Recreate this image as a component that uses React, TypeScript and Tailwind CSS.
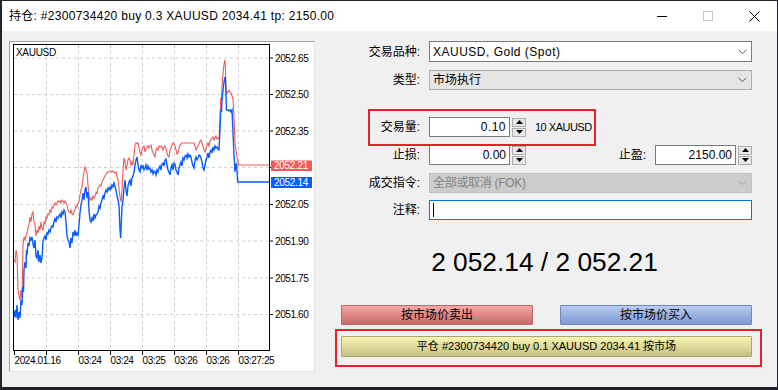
const FONT = { fontFamily: '"Liberation Sans", "Noto Sans CJK SC", sans-serif' };

const blue: number[][] = [
  [14,317],[15,310],[16,318],[17,305],[18,320],[19,312],[20,318],[21,300],[22,305],[22.7,287],[23.5,292],[24,270],[25,262],[26,268],[26.5,250],[27,255],[28,243],[29,246],[30,238],[31,240],[32,237],[33,244],[34,248],[35,240],[36,256],[37,258],[38,250],[39,262],[40,255],[41,263],[42,258],[43,241],[44,238],[45,236],[46,240],[47,233],[48,234],[49,230],[50,232],[51,228],[52,226],[53,227],[54,222],[55,218],[56,222],[57,217],[58,218],[59,216],[60,214],[61,218],[62,212],[63,214],[64,210],[65,212],[66,222],[67,236],[68,240],[69,242],[70,248],[71,238],[72,243],[73,232],[74,236],[75,230],[76,236],[77,233],[78,235],[79,225],[80,213],[81,205],[82,200],[83,193],[84,200],[85,190],[86,187],[87,198],[88,192],[89,210],[90,220],[91,222],[92,218],[93,221],[94,214],[95,218],[96,215],[97,214],[98,212],[99,206],[100,208],[101,203],[102,200],[103,196],[104,198],[105,193],[106,190],[107,192],[108,188],[109,190],[110,187],[111,189],[112,185],[113,187],[114,183],[115,186],[116,190],[117,196],[118,200],[119,205],[120,230],[120.7,238],[121.5,218],[122,207],[123,200],[124,188],[125,180],[126,190],[127,196],[128,186],[129,182],[130,180],[131,186],[132,178],[133,176],[134,172],[135,165],[136,160],[137,157],[138,165],[139,170],[140,172],[141,165],[142,168],[143,166],[144,170],[145,168],[146,165],[147,170],[148,166],[149,169],[150,168],[151,172],[152,170],[153,174],[154,171],[155,172],[156,175],[157,170],[158,172],[159,168],[160,166],[161,170],[162,164],[163,163],[164,166],[165,160],[166,159],[167,165],[168,170],[169,172],[170,175],[171,168],[172,165],[173,170],[174,163],[175,164],[176,170],[177,172],[178,175],[179,168],[180,165],[181,162],[182,166],[183,158],[184,160],[185,156],[186,155],[187,158],[188,154],[189,157],[190,155],[191,157],[192,162],[193,166],[194,168],[195,160],[196,157],[197,160],[198,158],[199,155],[200,156],[201,158],[202,162],[203,168],[204,170],[205,165],[206,160],[207,157],[208,153],[209,158],[210,152],[211,150],[212,153],[213,147],[214,150],[215,146],[216,148],[217,147],[218,149],[219,150],[220,130],[220.7,110],[221.5,112],[222,100],[223,90],[224,82],[225,77],[225.5,80],[226,95],[226.5,110],[228,110],[229,111],[230,110],[231,112],[232,110],[233,133],[234,155],[235,172],[236,165],[236.5,163],[237,170],[237.7,182],[270,182],
];

const red: number[][] = [
  [14,260],[15,262],[16,250],[17,255],[18,290],[19,296],[20,300],[21,290],[22,298],[23,245],[24,237],[25,240],[26,236],[27,233],[28,228],[29,225],[30,217],[31,222],[32,214],[33,212],[34,222],[35,225],[36,236],[37,230],[38,233],[39,226],[40,230],[41,222],[42,228],[43,230],[44,222],[45,224],[46,217],[47,218],[48,214],[49,215],[50,210],[51,212],[52,207],[53,208],[54,205],[55,203],[56,205],[57,203],[58,201],[59,202],[60,201],[61,203],[62,200],[63,201],[64,203],[65,201],[66,203],[67,205],[68,210],[69,212],[70,213],[71,210],[72,214],[73,215],[74,212],[75,210],[76,206],[77,207],[78,203],[79,202],[80,195],[81,190],[82,187],[83,178],[84,172],[85,167],[86,170],[87,173],[88,185],[89,195],[90,200],[91,198],[92,200],[93,196],[94,198],[95,197],[96,192],[97,193],[98,188],[99,187],[100,185],[101,186],[102,182],[103,180],[104,178],[105,176],[106,174],[107,173],[108,172],[110,171],[112,172],[113,171],[115,173],[116,172],[117,176],[118,180],[119,188],[120,197],[121,202],[122,190],[123,170],[124,158],[125,162],[126,170],[127,166],[128,160],[129,158],[130,160],[131,165],[132,162],[133,165],[134,155],[135,145],[136,143],[137,144],[138,143],[139,148],[140,152],[141,155],[142,150],[143,147],[144,146],[145,152],[146,149],[147,147],[148,146],[149,148],[150,146],[151,145],[152,150],[153,153],[154,155],[155,157],[156,150],[157,148],[158,150],[159,146],[160,147],[161,146],[162,147],[163,150],[164,147],[165,146],[166,149],[167,153],[168,156],[169,157],[170,150],[171,148],[172,145],[173,143],[174,144],[175,146],[176,150],[177,154],[178,153],[179,148],[180,145],[181,144],[182,143],[194,143],[195,146],[196,150],[197,148],[198,146],[199,144],[200,141],[201,140],[202,143],[203,146],[204,150],[205,152],[206,148],[207,145],[208,143],[209,146],[210,141],[211,140],[212,138],[213,137],[214,140],[215,138],[216,136],[217,139],[218,138],[219,139],[220,120],[220.7,98],[221.5,100],[222,86],[223,74],[224,64],[225,60],[225.5,70],[226,90],[226.5,95],[227,93],[228,92],[229,90],[230,92],[231,93],[232,96],[233,99],[234,117],[235,143],[236,150],[237,157],[238,162],[238.7,165],[270,165],
];

const pts = (a: number[][]) => a.map((p) => p.join(",")).join(" ");

const hGrid = [
  { y: 58, label: "2052.65" },
  { y: 94.5, label: "2052.50" },
  { y: 131, label: "2052.35" },
  { y: 167.5, label: "" },
  { y: 204.5, label: "2052.05" },
  { y: 241, label: "2051.90" },
  { y: 278, label: "2051.75" },
  { y: 314.5, label: "2051.60" },
];

const vGrid = [
  { x: 14, label: "2024.01.16" },
  { x: 46, label: "" },
  { x: 78, label: "03:24" },
  { x: 110, label: "03:24" },
  { x: 142, label: "03:25" },
  { x: 174, label: "03:26" },
  { x: 206, label: "03:26" },
  { x: 238, label: "03:27:25" },
];

function Chart() {
  return (
    <div className="ml-[7px] mt-[10px] h-[331px] w-[306px] border border-t-[#a0a0a0] border-l-[#a0a0a0] border-r-[#e3e3e3] border-b-[#e3e3e3] bg-white">
      <svg width="304" height="329" viewBox="10 42 304 329" className="block" style={FONT}>
        {hGrid.map((g) => (
          <g key={g.y}>
            <line x1="14" x2="269" y1={g.y} y2={g.y} stroke="#cfcfcf" strokeDasharray="3 3" />
            <line x1="270" x2="273" y1={g.y} y2={g.y} stroke="#000" />
            {g.label && (
              <text x="275" y={g.y + 3.6} fontSize="10" letterSpacing="-0.4" fill="#000">
                {g.label}
              </text>
            )}
          </g>
        ))}
        {vGrid.map((g) => (
          <g key={g.x}>
            {g.x > 14 && <line x1={g.x + 0.5} x2={g.x + 0.5} y1="45" y2="350" stroke="#cfcfcf" strokeDasharray="3 3" />}
            <line x1={g.x + 0.5} x2={g.x + 0.5} y1="351" y2="355" stroke="#000" />
            {g.label && (
              <text x={g.x + 0.5} y="364" fontSize="10" letterSpacing="-0.4" fill="#000">
                {g.label}
              </text>
            )}
          </g>
        ))}
        <polyline points={pts(red)} fill="none" stroke="#f25a5a" strokeWidth="1.1" strokeLinejoin="miter" />
        <polyline points={pts(blue)} fill="none" stroke="#0a5cff" strokeWidth="1.4" strokeLinejoin="miter" />
        <rect x="13.5" y="44.5" width="256" height="306" fill="none" stroke="#000" />
        <text x="16" y="55.5" fontSize="10" letterSpacing="-0.3" fill="#000">
          XAUUSD
        </text>
        <rect x="271" y="160.5" width="41" height="10.5" fill="#f25a5a" />
        <text x="274" y="169" fontSize="10" letterSpacing="-0.3" fill="#fff">
          2052.21
        </text>
        <rect x="271" y="177" width="41" height="11" fill="#0a5cff" />
        <text x="274" y="186" fontSize="10" letterSpacing="-0.3" fill="#fff">
          2052.14
        </text>
      </svg>
    </div>
  );
}

function Chevron({ color = "#5a5a5a" }: { color?: string }) {
  return (
    <svg width="9" height="6" viewBox="0 0 9 6" className="ml-auto mr-[4px]">
      <polyline points="0.5,0.8 4.5,4.6 8.5,0.8" fill="none" stroke={color} strokeWidth="1" />
    </svg>
  );
}

function Spinner() {
  return (
    <div className="ml-[2px] flex h-[19px] w-[14px] flex-col gap-[1px]">
      <div className="flex h-[9px] items-center justify-center border border-[#adadad] bg-[#e8e8e8]">
        <svg width="7" height="4" viewBox="0 0 7 4">
          <polygon points="0,4 7,4 3.5,0" fill="#000" />
        </svg>
      </div>
      <div className="flex h-[9px] items-center justify-center border border-[#adadad] bg-[#e8e8e8]">
        <svg width="7" height="4" viewBox="0 0 7 4">
          <polygon points="0,0 7,0 3.5,4" fill="#000" />
        </svg>
      </div>
    </div>
  );
}

function Label({ text }: { text: string }) {
  return <div className="w-[105px] shrink-0 text-right text-[12px] text-[#000]">{text}</div>;
}

export default function App() {
  return (
    <div className="h-[390px] w-[778px] bg-[#23232d] pl-[2px] pt-[1px]" style={FONT}>
      <div className="flex h-[386px] w-[775px] flex-col bg-[#f0f0f0]">
        {/* title bar */}
        <div className="flex h-[30px] shrink-0 items-center bg-white">
          <div className="pl-[7px] text-[12px] tracking-[0.3px] text-[#000]">持仓: #2300734420 buy 0.3 XAUUSD 2034.41 tp: 2150.00</div>
          <div className="ml-auto flex h-full">
            <div className="flex w-[46px] items-center justify-center">
              <div className="h-[1px] w-[10px] bg-[#000]" />
            </div>
            <div className="flex w-[46px] items-center justify-center">
              <div className="h-[10px] w-[10px] border border-[#c8c8c8]" />
            </div>
            <div className="flex w-[46px] items-center justify-center">
              <svg width="11" height="11" viewBox="0 0 11 11">
                <path d="M0.5 0.5 L10.5 10.5 M10.5 0.5 L0.5 10.5" stroke="#000" strokeWidth="1" />
              </svg>
            </div>
          </div>
        </div>

        {/* body */}
        <div className="flex flex-1">
          <Chart />

          <div className="relative flex flex-1 flex-col pr-[25px] pt-[10px]">
            <div className="flex h-[21px] items-center">
              <Label text="交易品种:" />
              <div className="ml-[9px] flex h-full flex-1 items-center border border-[#7a7a7a] bg-white pl-[3px] text-[12px] tracking-[0.5px]">
                XAUUSD, Gold (Spot)
                <Chevron />
              </div>
            </div>
            <div className="mt-[8px] flex h-[20px] items-center">
              <Label text="类型:" />
              <div className="ml-[9px] flex h-full flex-1 items-center border border-[#adadad] bg-[#e5e5e5] pl-[3px] text-[12px]">
                市场执行
                <Chevron />
              </div>
            </div>

            <div className="mt-[27px] flex h-[20px] items-center">
              <Label text="交易量:" />
              <div className="ml-[9px] flex h-full w-[81px] items-center justify-end border border-[#7a7a7a] bg-white pr-[3px] text-[12px] tracking-[0.5px]">
                0.10
              </div>
              <Spinner />
              <div className="ml-[9px] text-[11px] tracking-[-0.5px] text-[#000]">10 XAUUSD</div>
            </div>

            <div className="mt-[8px] flex h-[20px] items-center">
              <Label text="止损:" />
              <div className="ml-[9px] flex h-full w-[81px] items-center justify-end border border-[#7a7a7a] bg-white pr-[3px] text-[12px]">
                0.00
              </div>
              <Spinner />
              <div className="ml-auto text-[12px]">止盈:</div>
              <div className="ml-[9px] flex h-full w-[81px] items-center justify-end border border-[#7a7a7a] bg-white pr-[3px] text-[12px]">
                2150.00
              </div>
              <Spinner />
            </div>

            <div className="mt-[8px] flex h-[20px] items-center">
              <Label text="成交指令:" />
              <div className="ml-[9px] flex h-full flex-1 items-center border border-[#bfbfbf] bg-[#cccccc] pl-[3px] text-[12px] tracking-[-0.3px] text-[#838383]">
                全部或取消 (FOK)
                <Chevron color="#a8a8a8" />
              </div>
            </div>

            <div className="mt-[7px] flex h-[20px] items-center">
              <Label text="注释:" />
              <div className="ml-[9px] flex h-full flex-1 items-center border border-[#0078d7] bg-white pl-[3px]">
                <div className="h-[14px] w-[1px] bg-[#000]" />
              </div>
            </div>

            <div className="mt-[25px] flex h-[34px] items-center justify-center pl-[22px] text-[26.3px] leading-none text-[#000]">
              2 052.14 / 2 052.21
            </div>

            <div className="mt-[26px] flex justify-between pl-[26px]">
              <div className="flex h-[20px] w-[192px] items-center justify-center rounded-[1px] border border-[#b86a6a] bg-gradient-to-b from-[#f6a8a8] to-[#c86a6a] text-[12px] text-[#000]">
                按市场价卖出
              </div>
              <div className="flex h-[20px] w-[192px] items-center justify-center rounded-[1px] border border-[#6f86c0] bg-gradient-to-b from-[#bccdf4] to-[#7f97d2] text-[12px] text-[#000]">
                按市场价买入
              </div>
            </div>

            <div className="mt-[11px] pl-[26px]">
              <div className="flex h-[21px] items-center justify-center rounded-[1px] border border-[#aaa66e] bg-gradient-to-b from-[#f8f6b4] to-[#c6c182] text-[11px] text-[#000]">
                平仓 #2300734420 buy 0.1 XAUUSD 2034.41 按市场
              </div>
            </div>

            {/* highlight boxes */}
            <div className="pointer-events-none absolute left-[53px] top-[78px] h-[37px] w-[228px] border-2 border-[#e6212a]" />
            <div className="pointer-events-none absolute left-[20px] top-[298px] h-[38px] w-[427px] border-2 border-[#e6212a]" />
          </div>
        </div>
      </div>
    </div>
  );
}
